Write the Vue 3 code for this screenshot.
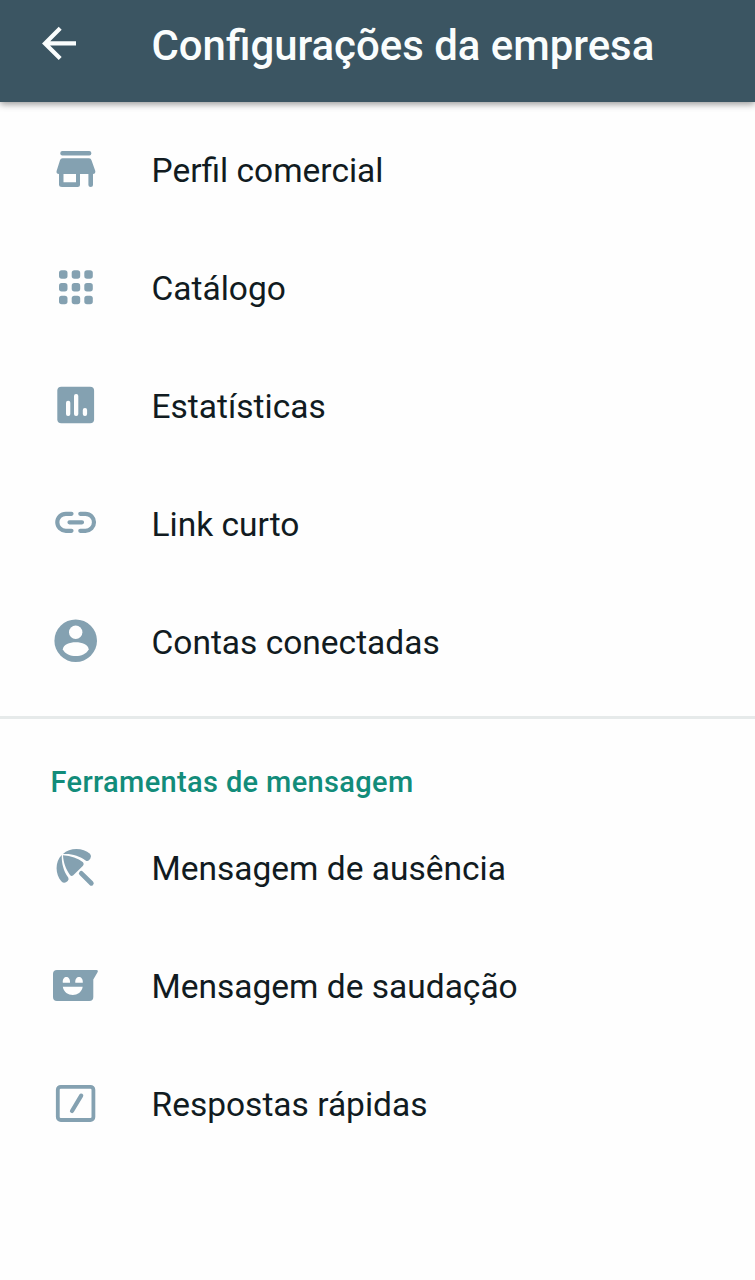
<script setup>
const business = [
  { icon: 'store', label: 'Perfil comercial', shift: 0 },
  { icon: 'grid', label: 'Catálogo', shift: -2 },
  { icon: 'stats', label: 'Estatísticas', shift: 1 },
  { icon: 'link', label: 'Link curto', shift: -1 },
  { icon: 'account', label: 'Contas conectadas', shift: 2 },
]
const messaging = [
  { icon: 'umbrella', label: 'Mensagem de ausência', shift: -2 },
  { icon: 'smile', label: 'Mensagem de saudação', shift: 1 },
  { icon: 'slash', label: 'Respostas rápidas', shift: -1 },
]
const sections = [
  { title: '', items: business },
  { title: 'Ferramentas de mensagem', items: messaging },
]
const dots = [19, 31.7, 44.3]
const dotRows = [15.2, 28, 40.8]
</script>

<template>
  <div class="screen">
    <header class="bar">
      <svg class="back" viewBox="0 0 40 40" width="40" height="40">
        <path d="M37 18.4H6.5M21.2 3.2 6 18.4 21.2 33.6" />
      </svg>
      <h1>Configurações da empresa</h1>
    </header>
    <section v-for="(section, i) in sections" :key="i" class="section">
      <h2 v-if="section.title">{{ section.title }}</h2>
      <div v-for="item in section.items" :key="item.icon" class="row">
        <svg class="icon" width="80" height="70" :viewBox="`0 ${item.shift} 80 70`">
          <g v-if="item.icon === 'store'">
            <rect x="20.3" y="16" width="31" height="4.6" rx="2" />
            <path d="M22.5 23.3H49Q51 23.3 51.5 25.2L55.3 36Q55.6 39 53 39V50Q53 52 50.7 52T48.4 50V39H40V49.5Q40 52 37.5 52H22Q19 52 19 49.5V39Q16 39 16.6 36L20 25.2Q20.5 23.3 22.5 23.3ZM23.5 39V47.3H36V39Z" />
          </g>
          <g v-else-if="item.icon === 'grid'">
            <template v-for="y in dotRows" :key="y">
              <rect v-for="x in dots" :key="x" :x="x" :y="y" width="8.5" height="8.5" rx="2.7" />
            </template>
          </g>
          <g v-else-if="item.icon === 'stats'">
            <rect x="17.3" y="16.7" width="36.8" height="36.6" rx="4" />
            <rect class="hole" x="26" y="30.7" width="4.3" height="15.3" rx="2" />
            <rect class="hole" x="34" y="24" width="4.3" height="22" rx="2" />
            <rect class="hole" x="42.8" y="38" width="4.3" height="8" rx="2" />
          </g>
          <g v-else-if="item.icon === 'link'" class="line">
            <path d="M31.5 23.8H25.8A8.5 8.5 0 0 0 25.8 40.8H31.5M40.3 23.8H45.5A8.5 8.5 0 0 1 45.5 40.8H40.3M29.5 32.3H42" />
          </g>
          <g v-else-if="item.icon === 'account'">
            <circle cx="35.7" cy="35.7" r="21.3" />
            <circle class="hole" cx="35.7" cy="27.3" r="6.7" />
            <path class="hole" d="M22.8 44.5C23.5 34.8 48 34.8 48.7 44.5C44 53.3 27.5 53.3 22.8 44.5Z" />
          </g>
          <g v-else-if="item.icon === 'umbrella'">
            <path d="M23 19C29.5 12.3 43 12.3 50 18.8Q52 21.3 50.4 23.6L49 25.2Q47.4 26.6 45.6 25.4C39.5 20.8 31.5 18.3 23 19Z" />
            <path d="M23 20.3C31 21 38 23.4 43 27.3Q44.5 29 43 30.7L33 40.6Q31.3 41.8 30 40C26 34.6 23.3 27.5 23 20.3Z" />
            <path d="M21.8 20C21.4 28 23.5 36 28.2 42.6Q29.3 44.6 27.7 46L26 47.3Q23.6 48.6 21.3 46.2C15.3 39.5 14.6 27 21.8 20Z" />
            <path class="handle" d="M41.3 38.4 51.3 48.3" />
          </g>
          <g v-else-if="item.icon === 'smile'">
            <path d="M17 20H56.5Q58.7 20.4 57.4 22.5L53.3 29.5V47Q53.3 51 49.3 51H17Q13 51 13 47V24Q13 20 17 20Z" />
            <path class="hole" d="M22.8 32.8C22 25 30.7 25 30 32.8ZM35.3 32.8C34.5 25 43.5 25 42.8 32.8ZM22.8 36.8H42.7C41 47.7 24.5 47.7 22.8 36.8Z" />
          </g>
          <g v-else class="line">
            <rect class="frame" x="17.8" y="16.8" width="35.6" height="33.2" rx="3" />
            <path d="M41.2 25.6 32 41" />
          </g>
        </svg>
        <span class="label">{{ item.label }}</span>
      </div>
    </section>
  </div>
</template>

<style>
body { margin: 0; background: #fefefe; }
</style>

<style scoped>
.screen {
  min-height: 1280px;
  box-sizing: border-box;
  background: #fefefe;
  color: #111b21;
  font-family: Roboto, "Liberation Sans", sans-serif;
}
.bar {
  display: flex;
  align-items: center;
  height: 102px;
  padding: 0 0 13px 39px;
  box-sizing: border-box;
  background: #3b5562;
  box-shadow: 0 2px 7px rgba(0, 0, 0, 0.42);
}
.back { flex: none; fill: none; stroke: #fafdfd; stroke-width: 4.2; }
h1 {
  margin: 3px 0 0 72.5px;
  color: #fafdfd;
  font-size: 41.9px;
  font-weight: 500;
  line-height: 50px;
  white-space: nowrap;
}
.section:nth-of-type(1) {
  padding: 9px 0 15px;
  border-bottom: 3px solid #e6eaea;
}
h2 {
  margin: 0;
  padding: 45px 0 9px 50.5px;
  color: #128c7a;
  font-size: 29px;
  font-weight: 500;
  line-height: 36px;
  letter-spacing: 0.35px;
}
.row {
  display: flex;
  align-items: center;
  height: 118px;
  padding-left: 40px;
}
.icon { flex: none; fill: #84a1b1; }
.hole { fill: #fefefe; }
.line, .handle {
  fill: none;
  stroke: #84a1b1;
  stroke-width: 4.2;
  stroke-linecap: round;
}
.handle { stroke-width: 4.8; }
.frame { stroke-width: 3.8; }
.label {
  margin: 2px 0 0 31.5px;
  font-size: 33.5px;
  line-height: 44px;
  white-space: nowrap;
}
</style>
